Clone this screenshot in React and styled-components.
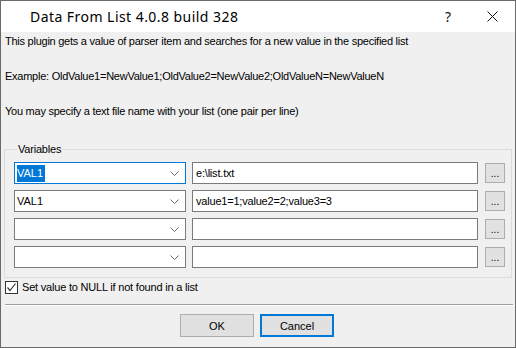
import React from 'react'
import styled, { createGlobalStyle } from 'styled-components'

const GlobalStyle = createGlobalStyle`
  html, body {
    margin: 0;
    padding: 0;
    background: #ffffff;
  }
  * {
    box-sizing: border-box;
  }
`

const rows = [
  { name: 'VAL1', list: 'e:\\list.txt', focused: true },
  { name: 'VAL1', list: 'value1=1;value2=2;value3=3' },
  { name: '', list: '' },
  { name: '', list: '' },
]

function Chevron() {
  return (
    <svg width="9" height="5" viewBox="0 0 9 5">
      <path d="M0.5 0.5 L4.5 4.5 L8.5 0.5" fill="none" stroke="#6d6d6d" strokeWidth="1" />
    </svg>
  )
}

function CloseIcon() {
  return (
    <svg width="11" height="11" viewBox="0 0 11 11">
      <path d="M0.5 0.5 L10.5 10.5 M10.5 0.5 L0.5 10.5" stroke="#111" strokeWidth="1" />
    </svg>
  )
}

export default function App() {
  return (
    <>
      <GlobalStyle />
      <Window>
        <TitleBar>
          <Title>Data From List 4.0.8 build 328</Title>
          <TitleButton $help>?</TitleButton>
          <TitleButton>
            <CloseIcon />
          </TitleButton>
        </TitleBar>
        <Content>
          <Note>This plugin gets a value of parser item and searches for a new value in the specified list</Note>
          <Note>Example: OldValue1=NewValue1;OldValue2=NewValue2;OldValueN=NewValueN</Note>
          <Note>You may specify a text file name with your list (one pair per line)</Note>
          <Group>
            <Legend>Variables</Legend>
            <Grid>
              {rows.map((row, i) => (
                <React.Fragment key={i}>
                  <Combo $focused={row.focused}>
                    <ComboText>
                      {row.focused ? <Selected>{row.name}</Selected> : row.name}
                    </ComboText>
                    <Chevron />
                  </Combo>
                  <Edit>{row.list}</Edit>
                  <Browse>...</Browse>
                </React.Fragment>
              ))}
            </Grid>
          </Group>
          <CheckRow>
            <CheckBox>
              <svg width="11" height="11" viewBox="0 0 11 11">
                <path d="M1.5 5.5 L4 8.5 L9.5 1.5" fill="none" stroke="#3a3a3a" strokeWidth="1.2" />
              </svg>
            </CheckBox>
            <CheckLabel>Set value to NULL if not found in a list</CheckLabel>
          </CheckRow>
          <Separator />
          <Buttons>
            <Button>OK</Button>
            <Button $default>Cancel</Button>
          </Buttons>
        </Content>
      </Window>
    </>
  )
}

const Window = styled.div`
  width: 516px;
  height: 348px;
  border: 1px solid #6a6a6a;
  display: flex;
  flex-direction: column;
  background: #f0f0f0;
  font-family: "Liberation Sans", Arial, sans-serif;
  color: #000;
`

const TitleBar = styled.div`
  height: 31px;
  background: #ffffff;
  display: flex;
  align-items: center;
  padding-left: 29px;
`

const Title = styled.div`
  flex: 1;
  font-family: "Noto Sans", "Liberation Sans", sans-serif;
  font-size: 14px;
  letter-spacing: 0.45px;
  color: #000;
  padding-bottom: 1px;
`

const TitleButton = styled.div`
  width: 46px;
  height: 31px;
  display: flex;
  align-items: center;
  justify-content: center;
  font-family: "Noto Sans", sans-serif;
  font-size: 14px;
  color: #111;
  padding-left: ${p => (p.$help ? '4px' : '0')};
`

const Content = styled.div`
  flex: 1;
  display: flex;
  flex-direction: column;
  padding: 3px 3px 0 3px;
`

const Note = styled.p`
  margin: 0 0 22px 1px;
  font-size: 11px;
  line-height: 13px;
  letter-spacing: -0.25px;
  white-space: nowrap;
`

const Group = styled.fieldset`
  margin: 3px 0 0 0;
  width: 508px;
  border: 1px solid #dcdcdc;
  padding: 6px 5px 9px 9px;
`

const Legend = styled.legend`
  padding: 0 1px;
  margin-left: 3px;
  font-size: 11px;
  line-height: 13px;
  letter-spacing: -0.2px;
  color: #000;
`

const Grid = styled.div`
  display: grid;
  grid-template-columns: 172px 286px 20px;
  column-gap: 6px;
  row-gap: 6px;
  align-items: center;

  & > :nth-child(3n) {
    margin-left: 1px;
  }
`

const Combo = styled.div`
  height: 22px;
  background: #fff;
  border: 1px solid ${p => (p.$focused ? '#0078d7' : '#7a7a7a')};
  display: flex;
  align-items: center;
  padding: 0 6px 0 2px;
`

const ComboText = styled.div`
  flex: 1;
  font-size: 11px;
  line-height: 13px;
`

const Selected = styled.span`
  display: inline-block;
  background: #0078d7;
  color: #fff;
  padding: 2px 2px 2px 0;
  line-height: 13px;
`

const Edit = styled.div`
  height: 22px;
  background: #fff;
  border: 1px solid #7a7a7a;
  font-size: 11px;
  line-height: 13px;
  letter-spacing: -0.2px;
  padding: 4px 3px 0 3px;
`

const Browse = styled.div`
  width: 20px;
  height: 20px;
  background: #e1e1e1;
  border: 1px solid #adadad;
  display: flex;
  align-items: flex-end;
  justify-content: center;
  font-size: 10px;
  line-height: 13px;
  padding-bottom: 2px;
  color: #000;
`

const CheckRow = styled.div`
  display: flex;
  align-items: center;
  margin-top: 3px;
  margin-left: 1px;
  height: 13px;
`

const CheckBox = styled.div`
  width: 13px;
  height: 13px;
  border: 1px solid #333;
  background: #fff;
  display: flex;
  align-items: center;
  justify-content: center;
`

const CheckLabel = styled.span`
  margin-left: 4px;
  font-size: 11px;
  line-height: 13px;
  letter-spacing: -0.2px;
`

const Separator = styled.div`
  margin: 10px 0 0 1px;
  width: 508px;
  height: 2px;
  border-top: 1px solid #a0a0a0;
  border-bottom: 1px solid #ffffff;
`

const Buttons = styled.div`
  display: flex;
  justify-content: center;
  gap: 6px;
  margin-top: 8px;
  padding-right: 2px;
`

const Button = styled.div`
  width: 74px;
  height: 23px;
  background: #e1e1e1;
  border: ${p => (p.$default ? '2px solid #0078d7' : '1px solid #adadad')};
  display: flex;
  align-items: center;
  justify-content: center;
  font-size: 11px;
`
